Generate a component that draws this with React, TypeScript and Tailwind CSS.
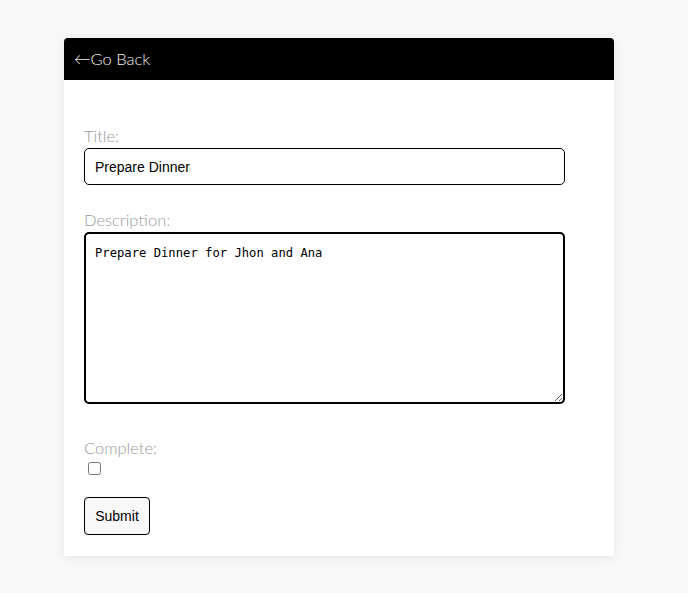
import { useState } from 'react';

export default function App() {
  const [title, setTitle] = useState('Prepare Dinner');
  const [desc, setDesc] = useState('Prepare Dinner for Jhon and Ana');
  const [done, setDone] = useState(false);

  const label = "block text-[16.5px] leading-6 font-light text-[#999999] [font-family:'Lato','Noto_Sans',sans-serif]";

  return (
    <div className="min-h-[593px] bg-[#f8f8f8] pt-[38px]">
      <div className="ml-[64px] w-[550px] rounded-t-[4px] bg-white shadow-[0_2px_10px_rgba(0,0,0,0.08)]">
        <header className="h-[42px] rounded-t-[4px] bg-black flex items-center px-[10px]">
          <a href="#" className="text-[16.5px] font-light text-[#f2f2ea] [font-family:'Lato','Noto_Sans',sans-serif]">
            ←Go Back
          </a>
        </header>

        <form className="px-[20px] pt-[44px] pb-[21px]" onSubmit={(e) => e.preventDefault()}>
          <label className={label}>Title:</label>
          <input
            value={title}
            onChange={(e) => setTitle(e.target.value)}
            className="block w-[481px] h-[37px] rounded-[5px] border border-black px-[10px] text-[14px] text-black outline-none [font-family:'Liberation_Sans',Arial,sans-serif]"
          />

          <label className={`${label} mt-[23px]`}>Description:</label>
          <textarea
            value={desc}
            onChange={(e) => setDesc(e.target.value)}
            className="block w-[481px] h-[172px] rounded-[5px] border-2 border-black px-[9px] pt-[11px] pb-[8px] text-[12.2px] leading-[16px] text-black outline-none [font-family:'DejaVu_Sans_Mono','Liberation_Mono',monospace]"
          />

          <label className={`${label} mt-[32px]`}>Complete:</label>
          <input
            type="checkbox"
            checked={done}
            onChange={(e) => setDone(e.target.checked)}
            className="block ml-[4px] mt-[2px] w-[13px] h-[13px]"
          />

          <button
            type="submit"
            className="block mt-[22px] w-[66px] h-[38px] rounded-[4px] border border-black bg-[#f8f8f8] text-[14px] text-black [font-family:'Liberation_Sans',Arial,sans-serif]"
          >
            Submit
          </button>
        </form>
      </div>
    </div>
  );
}
